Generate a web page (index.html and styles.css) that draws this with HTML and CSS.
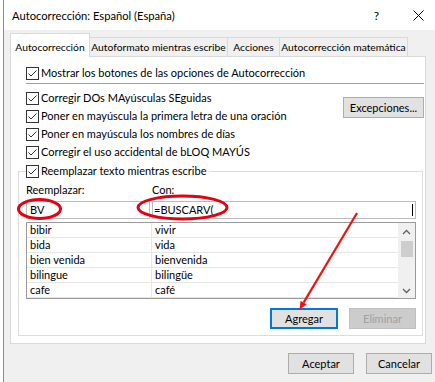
FILE: index.html
```html
<!DOCTYPE html>
<html lang="es">
<head>
<meta charset="utf-8">
<title>Autocorrección</title>
<link rel="stylesheet" href="styles.css">
</head>
<body>
<div class="window">
  <div class="titlebar">
    <span class="title">Autocorrección: Español (España)</span>
    <span class="help">?</span>
    <svg class="close" width="11" height="11" viewBox="0 0 11 11"><path d="M0.5 0.5L10.5 10.5M10.5 0.5L0.5 10.5" stroke="#000" stroke-width="1"/></svg>
  </div>
  <div class="content">
    <div class="tabs">
      <div class="tab active t1">Autocorrección</div>
      <div class="tab t2">Autoformato mientras escribe</div>
      <div class="tab t3">Acciones</div>
      <div class="tab t4">Autocorrección matemática</div>
    </div>
    <div class="panel">
      <div class="check indent"><svg class="box" width="13" height="13" viewBox="0 0 13 13"><rect x="0.5" y="0.5" width="12" height="12" fill="#fff" stroke="#333"/><path d="M2.5 6.5L5 9L10.5 3.5" fill="none" stroke="#333" stroke-width="1"/></svg>Mostrar los botones de las opciones de Autocorrección</div>
      <div class="sep"></div>
      <div class="opts">
        <div class="checks">
          <div class="check"><svg class="box" width="13" height="13" viewBox="0 0 13 13"><rect x="0.5" y="0.5" width="12" height="12" fill="#fff" stroke="#333"/><path d="M2.5 6.5L5 9L10.5 3.5" fill="none" stroke="#333" stroke-width="1"/></svg>Corregir DOs MAyúsculas SEguidas</div>
          <div class="check"><svg class="box" width="13" height="13" viewBox="0 0 13 13"><rect x="0.5" y="0.5" width="12" height="12" fill="#fff" stroke="#333"/><path d="M2.5 6.5L5 9L10.5 3.5" fill="none" stroke="#333" stroke-width="1"/></svg>Poner en mayúscula la primera letra de una oración</div>
          <div class="check"><svg class="box" width="13" height="13" viewBox="0 0 13 13"><rect x="0.5" y="0.5" width="12" height="12" fill="#fff" stroke="#333"/><path d="M2.5 6.5L5 9L10.5 3.5" fill="none" stroke="#333" stroke-width="1"/></svg>Poner en mayúscula los nombres de días</div>
          <div class="check"><svg class="box" width="13" height="13" viewBox="0 0 13 13"><rect x="0.5" y="0.5" width="12" height="12" fill="#fff" stroke="#333"/><path d="M2.5 6.5L5 9L10.5 3.5" fill="none" stroke="#333" stroke-width="1"/></svg>Corregir el uso accidental de bLOQ MAYÚS</div>
        </div>
        <button class="btn exc">Excepciones...</button>
      </div>
      <div class="group">
        <div class="check legend"><svg class="box" width="13" height="13" viewBox="0 0 13 13"><rect x="0.5" y="0.5" width="12" height="12" fill="#fff" stroke="#333"/><path d="M2.5 6.5L5 9L10.5 3.5" fill="none" stroke="#333" stroke-width="1"/></svg>Reemplazar texto mientras escribe</div>
        <div class="labels"><span class="lab1">Reemplazar:</span><span>Con:</span></div>
        <div class="inputs">
          <div class="inp i1">BV</div>
          <div class="inp i2">=BUSCARV(<span class="caret"></span></div>
        </div>
        <div class="list">
          <div class="rows">
            <div class="row"><span class="c1">bibir</span><span class="c2">vivir</span></div>
            <div class="row"><span class="c1">bida</span><span class="c2">vida</span></div>
            <div class="row"><span class="c1">bien venida</span><span class="c2">bienvenida</span></div>
            <div class="row"><span class="c1">bilingue</span><span class="c2">bilingüe</span></div>
            <div class="row"><span class="c1">cafe</span><span class="c2">café</span></div>
          </div>
          <div class="scroll">
            <svg class="chev" width="9" height="6" viewBox="0 0 9 6"><path d="M1 5L4.5 1.5L8 5" fill="none" stroke="#606060" stroke-width="1.3"/></svg>
            <div class="thumb"></div>
            <div class="track"></div>
            <svg class="chev" width="9" height="6" viewBox="0 0 9 6"><path d="M1 1L4.5 4.5L8 1" fill="none" stroke="#606060" stroke-width="1.3"/></svg>
          </div>
        </div>
        <div class="actions">
          <button class="btn default">Agregar</button>
          <button class="btn disabled">Eliminar</button>
        </div>
      </div>
    </div>
    <div class="footer">
      <button class="btn">Aceptar</button>
      <button class="btn">Cancelar</button>
    </div>
  </div>
</div>
<svg class="annot" width="435" height="382" viewBox="0 0 435 382">
  <ellipse cx="39.5" cy="209" rx="21" ry="9.5" fill="none" stroke="#e60012" stroke-width="3"/>
  <ellipse cx="182.5" cy="207.5" rx="44.5" ry="11.5" fill="none" stroke="#e60012" stroke-width="3"/>
  <line x1="357" y1="213" x2="303.6" y2="302.6" stroke="#f01010" stroke-width="2.2"/>
  <polygon points="299.5,309.5 306.6,304.4 300.6,300.8" fill="#f01010"/>
</svg>
</body>
</html>
```

FILE: styles.css
```css
* { box-sizing: border-box; }

body {
  margin: 0;
  width: 435px;
  height: 382px;
  overflow: hidden;
  position: relative;
  background: #fff;
  font-family: Lato, "Noto Sans", sans-serif;
  font-size: 11px;
  color: #000;
}

.window {
  margin-left: 3px;
  height: 382px;
  border-left: 1px solid #8c8c8c;
  background: #f0f0f0;
}

.titlebar {
  height: 30px;
  background: #fff;
  display: flex;
  align-items: center;
  padding-left: 8px;
}

.title {
  flex: 1;
  font-size: 11.2px;
}

.help {
  font-size: 12px;
  margin-right: 34px;
}

.close {
  margin-right: 11px;
}

.content {
  padding: 0 3px 0 6px;
}

.tabs {
  display: flex;
  align-items: flex-end;
  height: 26px;
}

.tab {
  height: 19px;
  padding-top: 2px;
  text-align: center;
  font-size: 10.3px;
  line-height: 14px;
  background: #f0f0f0;
  border: 1px solid #d9d9d9;
  border-bottom: none;
  margin-left: -1px;
  white-space: nowrap;
}

.tab.active {
  position: relative;
  z-index: 1;
  height: 24px;
  margin-bottom: -1px;
  padding-top: 6px;
  margin-left: 0;
  background: #fff;
}

.t1 { width: 80px; }
.t2 { width: 139px; }
.t3 { width: 53px; }
.t4 { width: 129px; }

.panel {
  width: 416px;
  background: #fff;
  border: 1px solid #d9d9d9;
  padding: 9px 1px 7px 7px;
}

.check {
  display: flex;
  align-items: center;
  gap: 2px;
  height: 14px;
  line-height: 14px;
  white-space: nowrap;
}

.box { flex: none; }

.indent { margin-left: 8px; }

.sep {
  margin: 3px 0 0 8px;
  border-top: 1px solid #a0a0a0;
}

.opts {
  margin: 7px 0 0 8px;
  display: flex;
  justify-content: space-between;
  align-items: flex-start;
}

.checks {
  display: flex;
  flex-direction: column;
  gap: 4px;
}

.btn {
  font: inherit;
  color: #000;
  height: 21px;
  background: #e1e1e1;
  border: 1px solid #adadad;
  padding: 0;
  line-height: 18px;
}

.exc {
  width: 81px;
  margin-top: 6px;
}

.group {
  margin: 12px 1px 0 0;
  border: 1px solid #dcdcdc;
  padding: 0 6px 6px 7px;
}

.legend {
  margin-top: -8px;
  width: fit-content;
  background: #fff;
  padding-right: 3px;
}

.labels {
  display: flex;
  margin-top: 5px;
  height: 14px;
  line-height: 14px;
}

.lab1 { width: 126px; }

.inputs {
  display: flex;
  margin-top: 4px;
  height: 18px;
}

.inp {
  border: 1px solid #bcbcbc;
  height: 18px;
  line-height: 16px;
  display: flex;
  align-items: center;
}

.i1 {
  width: 124px;
  padding-left: 3px;
}

.i2 {
  flex: 1;
  margin-left: 2px;
  padding-left: 1px;
  padding-right: 2px;
}

.caret {
  margin-left: auto;
  width: 1px;
  height: 12px;
  background: #000;
}

.list {
  margin-top: 3px;
  height: 77px;
  border: 1px solid #9a9a9a;
  display: flex;
  overflow: hidden;
}

.rows {
  flex: 1;
}

.row {
  display: flex;
  height: 15px;
  line-height: 14px;
  border-bottom: 1px solid #e6e6e6;
}

.c1 {
  width: 125px;
  padding-left: 3px;
  border-right: 1px solid #e6e6e6;
}

.c2 {
  padding-left: 3px;
}

.scroll {
  width: 17px;
  background: #f0f0f0;
  display: flex;
  flex-direction: column;
  align-items: center;
  padding: 6px 0 4px;
}

.thumb {
  margin-top: 6px;
  width: 12px;
  height: 16px;
  background: #cdcdcd;
}

.track { flex: 1; }

.actions {
  display: flex;
  justify-content: flex-end;
  gap: 11px;
  margin-top: 9px;
}

.actions .btn { width: 68px; }

.btn.default {
  border: 2px solid #0078d7;
  line-height: 16px;
}

.btn.disabled {
  width: 67px;
  background: #cccccc;
  border-color: #bfbfbf;
  color: #a0a0a0;
}

.footer {
  display: flex;
  justify-content: flex-end;
  gap: 12px;
  margin-top: 9px;
}

.footer .btn { width: 66px; }

.annot {
  position: absolute;
  top: 0;
  left: 0;
  pointer-events: none;
}
```
